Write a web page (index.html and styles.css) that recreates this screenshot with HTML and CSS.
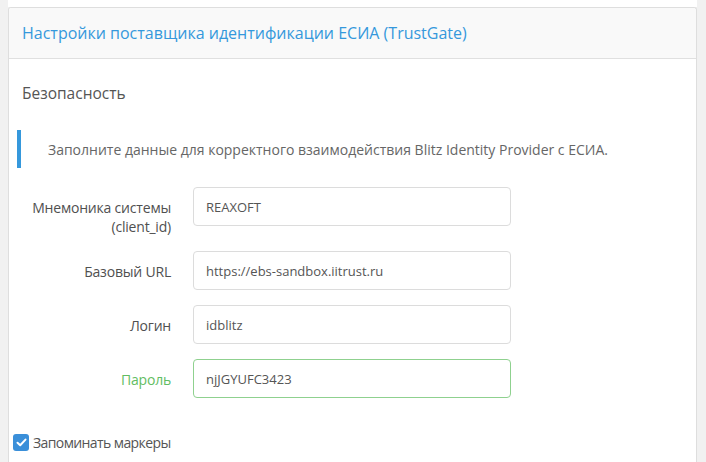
FILE: index.html
```html
<!DOCTYPE html>
<html lang="ru">
<head>
<meta charset="utf-8">
<link rel="stylesheet" href="styles.css">
</head>
<body>
<div class="page">
  <div class="prev-panel"></div>
  <div class="panel">
    <div class="panel-heading">Настройки поставщика идентификации ЕСИА (TrustGate)</div>
    <div class="panel-body">
      <h3 class="section-title">Безопасность</h3>
      <div class="note">Заполните данные для корректного взаимодействия Blitz Identity Provider с ЕСИА.</div>
      <div class="form">
        <div class="row">
          <label class="label">Мнемоника системы<br>(client_id)</label>
          <div class="input">REAXOFT</div>
        </div>
        <div class="row">
          <label class="label">Базовый URL</label>
          <div class="input">https://ebs-sandbox.iitrust.ru</div>
        </div>
        <div class="row">
          <label class="label">Логин</label>
          <div class="input">idblitz</div>
        </div>
        <div class="row success">
          <label class="label">Пароль</label>
          <div class="input">njJGYUFC3423</div>
        </div>
      </div>
      <div class="check-row">
        <span class="checkbox"><svg width="11" height="9" viewBox="0 0 11 9"><path d="M1.5 4.8 L4.2 7.3 L9.5 1.6" fill="none" stroke="#fff" stroke-width="2" stroke-linecap="round" stroke-linejoin="round"/></svg></span>
        <span class="check-label">Запоминать маркеры</span>
      </div>
    </div>
  </div>
</div>
</body>
</html>
```

FILE: styles.css
```css
html, body {
  margin: 0;
  padding: 0;
  background: #f1f1f1;
  font-family: "Open Sans", "Noto Sans", sans-serif;
}
.page {
  padding: 0 9px 0 8px;
}
.prev-panel {
  height: 7px;
  background: #fff;
}
.panel {
  background: #fff;
  border: 1px solid #dedede;
  border-bottom: none;
  border-radius: 3px 3px 0 0;
  height: 455px;
  box-sizing: border-box;
}
.panel-heading {
  height: 50px;
  background: #f9f9f9;
  border-bottom: 1px solid #e0e0e0;
  border-radius: 3px 3px 0 0;
  padding: 0 13px;
  display: flex;
  align-items: center;
  color: #3598dc;
  font-size: 16px;
}
.panel-body {
  padding: 23px 0 0 0;
}
.section-title {
  margin: 0 0 0 13px;
  font-size: 15.5px;
  font-weight: 400;
  color: #555;
  line-height: 22px;
}
.note {
  margin: 26px 0 0 8px;
  border-left: 4px solid #3598dc;
  height: 38px;
  padding-left: 27px;
  display: flex;
  align-items: center;
  color: #666;
  font-size: 14px;
}
.form {
  margin-top: 19px;
}
.row {
  display: flex;
  align-items: flex-start;
  margin-bottom: 15px;
}
.label {
  width: 162px;
  text-align: right;
  padding-top: 11px;
  line-height: 19px;
  font-size: 14px;
  letter-spacing: -0.2px;
  font-weight: 400;
  color: #505050;
  flex: none;
}
.input {
  margin-left: 22px;
  width: 318px;
  height: 39px;
  box-sizing: border-box;
  border: 1px solid #dcdcdc;
  border-radius: 4px;
  padding: 0 12px;
  display: flex;
  align-items: center;
  font-size: 13px;
  color: #555;
}
.row.success .label {
  color: #62bd62;
}
.row.success .input {
  border-color: #8fd18f;
}
.check-row {
  display: flex;
  align-items: center;
  margin: 35px 0 0 4px;
}
.checkbox {
  width: 16px;
  height: 17px;
  border-radius: 3px;
  background: #3a8fd9;
  display: flex;
  align-items: center;
  justify-content: center;
  flex: none;
}
.check-label {
  margin-left: 4px;
  font-size: 14px;
  letter-spacing: -0.6px;
  color: #555;
}
```
